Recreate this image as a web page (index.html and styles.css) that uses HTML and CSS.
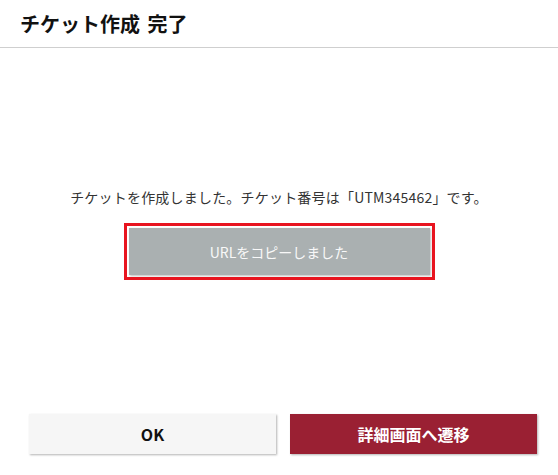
FILE: index.html
```html
<!DOCTYPE html>
<html>
<head>
  <meta charset="utf-8">
  <link rel="stylesheet" href="styles.css">
</head>
<body>
  <div class="dialog">
    <div class="header">
      <h1>チケット作成 完了</h1>
    </div>
    <div class="content">
      <p class="message">チケットを作成しました。チケット番号は「UTM345462」です。</p>
      <div class="copy-wrap">
        <button class="copy-button">URLをコピーしました</button>
      </div>
    </div>
    <div class="footer">
      <button class="btn btn-ok">OK</button>
      <button class="btn btn-detail">詳細画面へ遷移</button>
    </div>
  </div>
</body>
</html>
```

FILE: styles.css
```css
body {
  margin: 0;
  font-family: "Noto Sans CJK JP", "Noto Sans", sans-serif;
  background-color: #fff;
  color: #222;
}

.dialog {
  width: 558px;
  height: 475px;
  display: flex;
  flex-direction: column;
}

.header {
  height: 48px;
  border-bottom: 1px solid #cfcfcf;
  padding: 0 20px;
  display: flex;
  align-items: center;
  box-sizing: border-box;
}

.header h1 {
  margin: 0;
  font-size: 20px;
  font-weight: bold;
  color: #111;
  word-spacing: 3px;
}

.content {
  flex: 1;
  padding-top: 139px;
}

.message {
  margin: 0;
  font-size: 14px;
  line-height: 20px;
  text-align: center;
  color: #333;
  letter-spacing: 0.2px;
}

.copy-wrap {
  display: flex;
  justify-content: center;
  margin-top: 21px;
}

.copy-button {
  width: 301px;
  height: 47px;
  border: none;
  background-color: #aab0b1;
  color: #f8f8f8;
  font-family: inherit;
  font-size: 14px;
  box-shadow: 1px 1px 2px rgba(0, 0, 0, 0.25);
  outline: 3px solid #e8141f;
  outline-offset: 2px;
}

.footer {
  display: flex;
  gap: 14px;
  padding: 0 21px 21px 29px;
}

.btn {
  flex: 1;
  height: 40px;
  border: none;
  font-family: inherit;
  font-size: 16px;
  font-weight: bold;
  box-shadow: 1px 1px 2px rgba(0, 0, 0, 0.3);
}

.btn-ok {
  background-color: #f6f6f6;
  color: #111;
}

.btn-detail {
  background-color: #9a2033;
  color: #fff;
}
```
